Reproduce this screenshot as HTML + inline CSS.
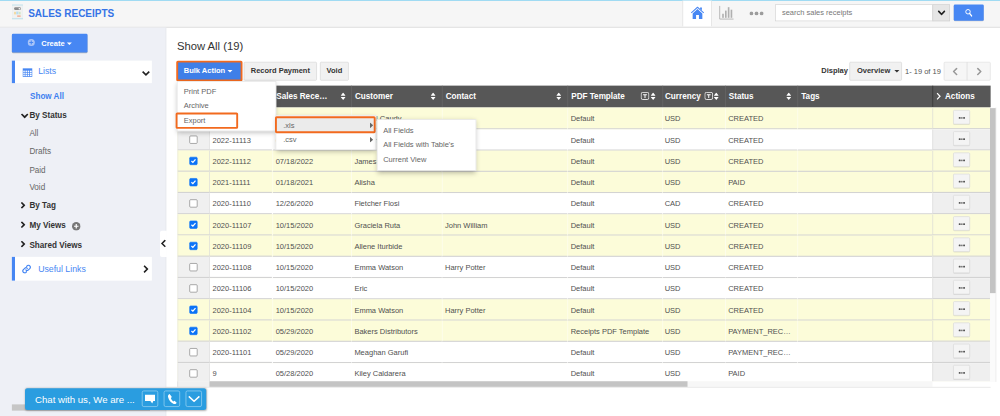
<!DOCTYPE html>
<html lang="en">
<head>
<meta charset="utf-8">
<title>Sales Receipts</title>
<style>
*{box-sizing:border-box;margin:0;padding:0}
html,body{width:1000px;height:416px;overflow:hidden;background:#fff}
body{font-family:"Liberation Sans",Arial,sans-serif;font-size:12px;color:#555}
#stage{position:absolute;left:0;top:0;width:1600px;height:666px;transform:scale(.625);transform-origin:0 0;background:#fff;overflow:hidden}
.abs{position:absolute}
/* ---------- header ---------- */
#hdr{position:absolute;left:0;top:0;width:1600px;height:44px;background:#f6f6f6;border-top:1.6px solid #6ccaf0;border-bottom:1.6px solid #d0d0d0}
#title{position:absolute;left:45px;top:11px;font-size:16px;font-weight:bold;color:#3573e6;line-height:20px;white-space:nowrap}
#hometab{position:absolute;left:1092px;top:0;width:47px;height:41px;background:#fff;border-left:1px solid #d9d9d9;border-right:1px solid #d9d9d9}
#search{position:absolute;left:1240px;top:6px;width:253px;height:27px;background:#fff;border:1px solid #cfcfcf;font-size:12px;color:#777;line-height:25px;padding-left:10px}
#scaret{position:absolute;left:1492px;top:6px;width:28px;height:27px;background:#e6e6e6;border:1px solid #cfcfcf}
#sbtn{position:absolute;left:1526px;top:6px;width:48px;height:26px;background:#4787f3;border-radius:2px;box-shadow:0 1px 1px rgba(0,0,0,.2)}
/* ---------- sidebar ---------- */
#side{position:absolute;left:0;top:44px;width:266px;height:622px;background:#eef0f6;border-right:1px solid #e3e5ea}
#create{position:absolute;left:19px;top:10px;width:121px;height:30px;background:#4787f3;color:#fff;font-weight:bold;font-size:12px;line-height:30px;border-radius:2px;box-shadow:0 1px 1px rgba(0,0,0,.25);white-space:nowrap}
.panel{position:absolute;left:19px;width:224px;background:#fff;border-left:5px solid #4787f3;color:#4787f3;font-size:14px;white-space:nowrap}
.nav{position:absolute;white-space:nowrap;font-size:13px;line-height:16px}
.nav.b{font-weight:bold;color:#333}
.nav.n{color:#666}
/* ---------- main ---------- */
#h1{position:absolute;left:283px;top:63px;font-size:18px;line-height:22px;color:#333;white-space:nowrap}
.btn{position:absolute;top:99px;height:30px;background:#f1f1f1;border:1px solid #d4d4d4;border-radius:2px;font-weight:bold;font-size:12px;color:#333;line-height:26px;text-align:center;white-space:nowrap}
#bulk{position:absolute;left:282px;top:97px;width:106px;height:33px;background:#3f7fe8;border:3px solid #f26a1e;border-radius:2.5px;color:#fff;font-weight:bold;font-size:12px;line-height:27px;white-space:nowrap;padding-left:9px}
.caret{display:inline-block;width:0;height:0;border-left:4px solid transparent;border-right:4px solid transparent;border-top:4px solid currentColor;vertical-align:middle;margin-left:4px}
/* table */
#thead{position:absolute;left:284px;top:137px;width:1301px;height:34.8px;background:#575757}
.th{position:absolute;top:0;height:34px;line-height:34px;color:#fff;font-weight:bold;font-size:13px;white-space:nowrap;border-left:1px solid #6a6a6a;padding-left:5px}
.sort{position:absolute;top:11px}
#tbody{position:absolute;left:284px;top:171.8px;width:1300px;height:438.5px;overflow:hidden;padding-top:1.7px;background:#fcfcd9}
.row{position:relative;height:34px;width:1300px;background:#fff}
.row.sel{background:#fcfcd9}
.row .c{position:absolute;top:0;height:34px;border-bottom:2px solid #d3d3d3;line-height:34.6px;font-size:12px;color:#505050;white-space:nowrap;overflow:hidden;padding-left:4px;border-left:1px solid rgba(255,255,255,.75)}
.row .c.first{border-left:1px solid #d9d9d9}
.row .cb{position:absolute;left:0;top:0;width:51px;height:34px;background:#f0f0f0;border-left:1px solid #d6d6d6;border-bottom:2px solid #d3d3d3}
.row.sel .cb{background:#fcfcd9}
.row .act{position:absolute;left:1208px;top:0;width:92px;height:34px;background:#efefef;border-left:1px solid #d6d6d6;border-bottom:2px solid #d3d3d3}
.row.sel .act{background:#fcfcd9}
.dots{position:absolute;left:32px;top:3px;width:27px;height:23px;background:#f4f4f4;border:1px solid #d8d8d8;border-radius:2px;box-shadow:0 1px 1px rgba(0,0,0,.08)}
.dots i{position:absolute;top:9.5px;width:2.6px;height:2.6px;background:#555;border-radius:1px}
.chk{position:absolute;left:18px;top:10px;width:13px;height:13px;border:1px solid #7a7a7a;border-radius:2px;background:#fff}
.chk.on{border-color:#0b73f7;background:#0b73f7}
/* menus */
.menu{position:absolute;background:#fff;box-shadow:0 3px 8px rgba(0,0,0,.28);border:1px solid #e2e2e2;font-size:12px;color:#666}
.menu div{position:absolute;left:0;white-space:nowrap;line-height:23px;height:23px}
.cbx{top:4px;width:26px;height:26px;border:1px solid #a8daf6;border-radius:3px;background:#2a9de0}
.obox{position:absolute;border:3px solid #f26a1e;border-radius:2.5px}
</style>
</head>
<body>
<div id="stage">

<!-- ================= HEADER ================= -->
<div id="hdr">
  <svg class="abs" style="left:19px;top:6px" width="18" height="24" viewBox="0 0 18 24">
    <rect x="0.5" y="0.5" width="17" height="23" fill="#f1f1f0" stroke="#e3eef2" stroke-width="1"/>
    <rect x="0" y="0" width="18" height="1.6" fill="#b4dcea"/><rect x="0" y="22.4" width="18" height="1.6" fill="#b4dcea"/>
    <rect x="3.5" y="4.5" width="11" height="4.6" rx="2.2" fill="#8c8c8c"/><rect x="10.6" y="5.6" width="3" height="2.4" rx="1.2" fill="#f4f4f4"/>
    <rect x="3.5" y="12" width="3" height="4" fill="#f3d9a0"/><rect x="7" y="11.5" width="3.5" height="4.5" fill="#b9dcef"/><rect x="11" y="12" width="3" height="4" fill="#cfe6c4"/>
    <rect x="8.5" y="17.5" width="5.5" height="2.6" fill="#f2b49c"/>
  </svg>
  <div id="title">SALES RECEIPTS</div>

  <div id="hometab">
    <svg class="abs" style="left:12px;top:9px" width="22" height="21" viewBox="0 0 24 23">
      <path d="M12 0.5 L23.5 11 L22.3 12.3 L12 3 L1.7 12.3 L0.5 11 Z" fill="#4787f3"/>
      <path d="M16.5 2 h3.2 v5.2 l-3.2 -2.9 Z" fill="#4787f3"/>
      <path d="M12 5 L20.5 12.7 V22.5 H14.5 V15.5 H9.5 V22.5 H3.5 V12.7 Z" fill="#4787f3"/>
    </svg>
  </div>
  <svg class="abs" style="left:1150px;top:8px" width="24" height="23" viewBox="0 0 24 23">
    <path d="M1.5 0 V21.5 H24" fill="none" stroke="#b9b9b9" stroke-width="1.6"/>
    <rect x="5.5" y="13" width="2.6" height="6.5" fill="#b0b0b0"/>
    <rect x="10" y="8" width="2.6" height="11.5" fill="#b0b0b0"/>
    <rect x="14.5" y="2.5" width="2.6" height="17" fill="#b0b0b0"/>
    <rect x="19" y="6.5" width="2.6" height="13" fill="#b0b0b0"/>
  </svg>
  <svg class="abs" style="left:1199px;top:17px" width="23" height="7" viewBox="0 0 23 7">
    <circle cx="3.2" cy="3.5" r="3" fill="#9c9c9c"/><circle cx="11.4" cy="3.5" r="3" fill="#9c9c9c"/><circle cx="19.6" cy="3.5" r="3" fill="#9c9c9c"/>
  </svg>
  <div id="search">search sales receipts</div>
  <div id="scaret">
    <svg class="abs" style="left:7px;top:8px" width="13" height="9" viewBox="0 0 13 9"><path d="M1.2 1.5 L6.5 6.8 L11.8 1.5" fill="none" stroke="#222" stroke-width="2.6"/></svg>
  </div>
  <div id="sbtn">
    <svg class="abs" style="left:18px;top:7px" width="12" height="13" viewBox="0 0 12 13"><circle cx="4.8" cy="4.8" r="3.6" fill="none" stroke="#fff" stroke-width="1.5"/><path d="M7.4 7.6 L10.8 11.6" stroke="#fff" stroke-width="1.9" stroke-linecap="round"/></svg>
  </div>
</div>

<!-- ================= SIDEBAR ================= -->
<div id="side">
  <div id="create">
    <svg class="abs" style="left:25px;top:8px" width="12" height="12" viewBox="0 0 13 13"><circle cx="6.5" cy="6.5" r="6.2" fill="#a9c4f8"/><path d="M6.5 3.2 V9.8 M3.2 6.5 H9.8" stroke="#4787f3" stroke-width="1.8"/></svg>
    <span class="abs" style="left:47px;top:0">Create<span class="caret"></span></span>
  </div>

  <div class="panel" style="top:53px;height:36px;line-height:33px">
    <svg class="abs" style="left:12px;top:12px" width="16" height="14" viewBox="0 0 16 14"><rect x="0" y="0" width="16" height="14" fill="#4787f3"/><g fill="#fff"><rect x="1.3" y="4" width="2.3" height="2.4"/><rect x="4.8" y="4" width="2.3" height="2.4"/><rect x="8.3" y="4" width="2.3" height="2.4"/><rect x="11.8" y="4" width="2.9" height="2.4"/><rect x="1.3" y="7.4" width="2.3" height="2.4"/><rect x="4.8" y="7.4" width="2.3" height="2.4"/><rect x="8.3" y="7.4" width="2.3" height="2.4"/><rect x="11.8" y="7.4" width="2.9" height="2.4"/><rect x="1.3" y="10.6" width="2.3" height="2.2"/><rect x="4.8" y="10.6" width="2.3" height="2.2"/><rect x="8.3" y="10.6" width="2.3" height="2.2"/><rect x="11.8" y="10.6" width="2.9" height="2.2"/></g></svg>
    <span class="abs" style="left:37px;top:0">Lists</span>
    <svg class="abs" style="left:203px;top:16px" width="13" height="9" viewBox="0 0 13 9"><path d="M1.2 1.5 L6.5 6.8 L11.8 1.5" fill="none" stroke="#222" stroke-width="2.6"/></svg>
  </div>

  <div class="nav" style="left:48px;top:103px;font-weight:bold;color:#3f80f0">Show All</div>

  <svg class="abs" style="left:33px;top:137px" width="13" height="9" viewBox="0 0 11 8"><path d="M1 1.2 L5.5 5.8 L10 1.2" fill="none" stroke="#222" stroke-width="2.4"/></svg>
  <div class="nav b" style="left:47px;top:132px">By Status</div>
  <div class="nav n" style="left:47px;top:161px">All</div>
  <div class="nav n" style="left:47px;top:190.5px">Drafts</div>
  <div class="nav n" style="left:47px;top:219.5px">Paid</div>
  <div class="nav n" style="left:47px;top:247.5px">Void</div>

  <svg class="abs" style="left:33px;top:279px" width="8" height="11" viewBox="0 0 8 11"><path d="M1.2 1 L5.8 5.5 L1.2 10" fill="none" stroke="#222" stroke-width="2.6"/></svg>
  <div class="nav b" style="left:47px;top:276px">By Tag</div>
  <svg class="abs" style="left:33px;top:310px" width="8" height="11" viewBox="0 0 8 11"><path d="M1.2 1 L5.8 5.5 L1.2 10" fill="none" stroke="#222" stroke-width="2.6"/></svg>
  <div class="nav b" style="left:47px;top:308.5px">My Views</div>
  <svg class="abs" style="left:115px;top:311px" width="14" height="14" viewBox="0 0 13 13"><circle cx="6.5" cy="6.5" r="6.3" fill="#777"/><path d="M6.5 3.2 V9.8 M3.2 6.5 H9.8" stroke="#fff" stroke-width="1.8"/></svg>
  <svg class="abs" style="left:33px;top:341px" width="8" height="11" viewBox="0 0 8 11"><path d="M1.2 1 L5.8 5.5 L1.2 10" fill="none" stroke="#222" stroke-width="2.6"/></svg>
  <div class="nav b" style="left:47px;top:339.5px">Shared Views</div>

  <div class="panel" style="top:367px;height:38px;line-height:38px">
    <svg class="abs" style="left:11px;top:12px" width="15" height="15" viewBox="0 0 15 15"><g fill="none" stroke="#4787f3" stroke-width="1.9" stroke-linecap="round"><path d="M6.3 8.7 a3 3 0 0 0 4.2 0 l2.4 -2.4 a3 3 0 0 0 -4.2 -4.2 l-1.1 1.1"/><path d="M8.7 6.3 a3 3 0 0 0 -4.2 0 l-2.4 2.4 a3 3 0 0 0 4.2 4.2 l1.1 -1.1"/></g></svg>
    <span class="abs" style="left:37px;top:0">Useful Links</span>
    <svg class="abs" style="left:205px;top:13px" width="9" height="13" viewBox="0 0 9 13"><path d="M1.5 1.2 L6.8 6.5 L1.5 11.8" fill="none" stroke="#222" stroke-width="2.6"/></svg>
  </div>

  <!-- collapse handle -->
  <div class="abs" style="left:256px;top:325px;width:11px;height:42px;background:#fff;border-radius:3px 0 0 3px">
    <svg class="abs" style="left:1px;top:14px" width="9" height="13" viewBox="0 0 9 13"><path d="M7.5 1.2 L2.2 6.5 L7.5 11.8" fill="none" stroke="#222" stroke-width="2.4"/></svg>
  </div>
  <!-- sidebar h scrollbar -->
  <div class="abs" style="left:19px;top:603px;width:221px;height:9.5px;background:#c6c6c6"></div>
</div>

<!-- ================= MAIN ================= -->
<div id="h1">Show All (19)</div>

<div id="bulk">Bulk Action<span class="caret"></span></div>
<div class="btn" style="left:390px;width:117px">Record Payment</div>
<div class="btn" style="left:512px;width:46px">Void</div>

<div class="abs" style="left:1314px;top:105px;font-weight:bold;font-size:12px;color:#333;line-height:16px">Display</div>
<div class="btn" style="left:1359px;width:84px;text-align:left;padding-left:11px">Overview<span class="caret" style="margin-left:7px"></span></div>
<div class="abs" style="left:1448px;top:106px;font-size:12px;color:#555;line-height:16px;white-space:nowrap">1- 19 of 19</div>
<div class="btn" style="left:1510px;width:38px;border-radius:2px 0 0 2px;background:#f6f6f6;border-color:#dedede">
  <svg class="abs" style="left:13px;top:8px" width="9" height="13" viewBox="0 0 9 13"><path d="M7.3 1 L1.8 6.5 L7.3 12" fill="none" stroke="#979797" stroke-width="2.3"/></svg>
</div>
<div class="btn" style="left:1547px;width:38px;border-radius:0 2px 2px 0;background:#f6f6f6;border-color:#dedede">
  <svg class="abs" style="left:14px;top:8px" width="9" height="13" viewBox="0 0 9 13"><path d="M1.7 1 L7.2 6.5 L1.7 12" fill="none" stroke="#979797" stroke-width="2.3"/></svg>
</div>

<!-- table header -->
<div id="thead">
  <div class="th" style="left:0;width:51px;border-left:none"></div>
  <div class="th" style="left:51px;width:100px">#</div>
  <div class="th" style="left:152px;width:126px">Sales Rece…<svg class="sort" style="left:108px" width="8" height="12" viewBox="0 0 8 12"><path d="M4 0 L8 5 H0 Z M0 7 H8 L4 12 Z" fill="#fff"/></svg></div>
  <div class="th" style="left:278px;width:145px">Customer<svg class="sort" style="left:126px" width="8" height="12" viewBox="0 0 8 12"><path d="M4 0 L8 5 H0 Z M0 7 H8 L4 12 Z" fill="#fff"/></svg></div>
  <div class="th" style="left:423px;width:201px">Contact<svg class="sort" style="left:182px" width="8" height="12" viewBox="0 0 8 12"><path d="M4 0 L8 5 H0 Z M0 7 H8 L4 12 Z" fill="#fff"/></svg></div>
  <div class="th" style="left:624px;width:152px">PDF Template<svg class="sort" style="left:116px;top:10px" width="14" height="13" viewBox="0 0 14 13"><rect x="0.8" y="0.8" width="12.4" height="11.4" rx="2.5" fill="none" stroke="#fff" stroke-width="1.3"/><path d="M4 3.6 H10 V5.2 H7.8 V9.8 H6.2 V5.2 H4 Z" fill="#fff"/></svg><svg class="sort" style="left:132px" width="8" height="12" viewBox="0 0 8 12"><path d="M4 0 L8 5 H0 Z M0 7 H8 L4 12 Z" fill="#fff"/></svg></div>
  <div class="th" style="left:776px;width:100px;padding-left:3px">Currency<svg class="sort" style="left:66px;top:10px" width="14" height="13" viewBox="0 0 14 13"><rect x="0.8" y="0.8" width="12.4" height="11.4" rx="2.5" fill="none" stroke="#fff" stroke-width="1.3"/><path d="M4 3.6 H10 V5.2 H7.8 V9.8 H6.2 V5.2 H4 Z" fill="#fff"/></svg><svg class="sort" style="left:81px" width="8" height="12" viewBox="0 0 8 12"><path d="M4 0 L8 5 H0 Z M0 7 H8 L4 12 Z" fill="#fff"/></svg></div>
  <div class="th" style="left:876px;width:116px">Status<svg class="sort" style="left:97px" width="8" height="12" viewBox="0 0 8 12"><path d="M4 0 L8 5 H0 Z M0 7 H8 L4 12 Z" fill="#fff"/></svg></div>
  <div class="th" style="left:992px;width:216px">Tags</div>
  <div class="th" style="left:1208px;width:93px;border-left:1px solid #2e2e2e">
    <svg class="abs" style="left:5px;top:11px" width="8" height="12" viewBox="0 0 8 12"><path d="M1.3 1 L6 6 L1.3 11" fill="none" stroke="#fff" stroke-width="2"/></svg>
    <span class="abs" style="left:19px;top:0">Actions</span>
  </div>
</div>

<!-- table body -->
<div id="tbody">
<div class="row sel"><div class="cb"><span class="chk on"><svg class="abs" style="left:1px;top:1px" width="9" height="9" viewBox="0 0 9 9"><path d="M1.3 4.6 L3.6 6.9 L7.8 2" fill="none" stroke="#fff" stroke-width="2"/></svg></span></div><div class="c first" style="left:51px;width:100px">2022-11114</div><div class="c" style="left:152px;width:126px">08/02/2022</div><div class="c" style="left:278px;width:145px">Rachel Caudy</div><div class="c" style="left:423px;width:201px"></div><div class="c" style="left:624px;width:152px">Default</div><div class="c" style="left:776px;width:100px;padding-left:2.5px">USD</div><div class="c" style="left:876px;width:116px">CREATED</div><div class="c" style="left:992px;width:216px"></div><div class="act"><span class="dots"><i style="left:8px"></i><i style="left:11.7px"></i><i style="left:15.4px"></i></span></div></div>
<div class="row"><div class="cb"><span class="chk"></span></div><div class="c first" style="left:51px;width:100px">2022-11113</div><div class="c" style="left:152px;width:126px">07/25/2022</div><div class="c" style="left:278px;width:145px">Joseph Degroot</div><div class="c" style="left:423px;width:201px"></div><div class="c" style="left:624px;width:152px">Default</div><div class="c" style="left:776px;width:100px;padding-left:2.5px">USD</div><div class="c" style="left:876px;width:116px">CREATED</div><div class="c" style="left:992px;width:216px"></div><div class="act"><span class="dots"><i style="left:8px"></i><i style="left:11.7px"></i><i style="left:15.4px"></i></span></div></div>
<div class="row sel"><div class="cb"><span class="chk on"><svg class="abs" style="left:1px;top:1px" width="9" height="9" viewBox="0 0 9 9"><path d="M1.3 4.6 L3.6 6.9 L7.8 2" fill="none" stroke="#fff" stroke-width="2"/></svg></span></div><div class="c first" style="left:51px;width:100px">2022-11112</div><div class="c" style="left:152px;width:126px">07/18/2022</div><div class="c" style="left:278px;width:145px">James Butt</div><div class="c" style="left:423px;width:201px"></div><div class="c" style="left:624px;width:152px">Default</div><div class="c" style="left:776px;width:100px;padding-left:2.5px">USD</div><div class="c" style="left:876px;width:116px">CREATED</div><div class="c" style="left:992px;width:216px"></div><div class="act"><span class="dots"><i style="left:8px"></i><i style="left:11.7px"></i><i style="left:15.4px"></i></span></div></div>
<div class="row sel"><div class="cb"><span class="chk on"><svg class="abs" style="left:1px;top:1px" width="9" height="9" viewBox="0 0 9 9"><path d="M1.3 4.6 L3.6 6.9 L7.8 2" fill="none" stroke="#fff" stroke-width="2"/></svg></span></div><div class="c first" style="left:51px;width:100px">2021-11111</div><div class="c" style="left:152px;width:126px">01/18/2021</div><div class="c" style="left:278px;width:145px">Alisha</div><div class="c" style="left:423px;width:201px"></div><div class="c" style="left:624px;width:152px">Default</div><div class="c" style="left:776px;width:100px;padding-left:2.5px">USD</div><div class="c" style="left:876px;width:116px">PAID</div><div class="c" style="left:992px;width:216px"></div><div class="act"><span class="dots"><i style="left:8px"></i><i style="left:11.7px"></i><i style="left:15.4px"></i></span></div></div>
<div class="row"><div class="cb"><span class="chk"></span></div><div class="c first" style="left:51px;width:100px">2020-11110</div><div class="c" style="left:152px;width:126px">12/26/2020</div><div class="c" style="left:278px;width:145px">Fletcher Flosi</div><div class="c" style="left:423px;width:201px"></div><div class="c" style="left:624px;width:152px">Default</div><div class="c" style="left:776px;width:100px;padding-left:2.5px">CAD</div><div class="c" style="left:876px;width:116px">CREATED</div><div class="c" style="left:992px;width:216px"></div><div class="act"><span class="dots"><i style="left:8px"></i><i style="left:11.7px"></i><i style="left:15.4px"></i></span></div></div>
<div class="row sel"><div class="cb"><span class="chk on"><svg class="abs" style="left:1px;top:1px" width="9" height="9" viewBox="0 0 9 9"><path d="M1.3 4.6 L3.6 6.9 L7.8 2" fill="none" stroke="#fff" stroke-width="2"/></svg></span></div><div class="c first" style="left:51px;width:100px">2020-11107</div><div class="c" style="left:152px;width:126px">10/15/2020</div><div class="c" style="left:278px;width:145px">Graciela Ruta</div><div class="c" style="left:423px;width:201px">John William</div><div class="c" style="left:624px;width:152px">Default</div><div class="c" style="left:776px;width:100px;padding-left:2.5px">USD</div><div class="c" style="left:876px;width:116px">CREATED</div><div class="c" style="left:992px;width:216px"></div><div class="act"><span class="dots"><i style="left:8px"></i><i style="left:11.7px"></i><i style="left:15.4px"></i></span></div></div>
<div class="row sel"><div class="cb"><span class="chk on"><svg class="abs" style="left:1px;top:1px" width="9" height="9" viewBox="0 0 9 9"><path d="M1.3 4.6 L3.6 6.9 L7.8 2" fill="none" stroke="#fff" stroke-width="2"/></svg></span></div><div class="c first" style="left:51px;width:100px">2020-11109</div><div class="c" style="left:152px;width:126px">10/15/2020</div><div class="c" style="left:278px;width:145px">Allene Iturbide</div><div class="c" style="left:423px;width:201px"></div><div class="c" style="left:624px;width:152px">Default</div><div class="c" style="left:776px;width:100px;padding-left:2.5px">USD</div><div class="c" style="left:876px;width:116px">CREATED</div><div class="c" style="left:992px;width:216px"></div><div class="act"><span class="dots"><i style="left:8px"></i><i style="left:11.7px"></i><i style="left:15.4px"></i></span></div></div>
<div class="row"><div class="cb"><span class="chk"></span></div><div class="c first" style="left:51px;width:100px">2020-11108</div><div class="c" style="left:152px;width:126px">10/15/2020</div><div class="c" style="left:278px;width:145px">Emma Watson</div><div class="c" style="left:423px;width:201px">Harry Potter</div><div class="c" style="left:624px;width:152px">Default</div><div class="c" style="left:776px;width:100px;padding-left:2.5px">USD</div><div class="c" style="left:876px;width:116px">CREATED</div><div class="c" style="left:992px;width:216px"></div><div class="act"><span class="dots"><i style="left:8px"></i><i style="left:11.7px"></i><i style="left:15.4px"></i></span></div></div>
<div class="row"><div class="cb"><span class="chk"></span></div><div class="c first" style="left:51px;width:100px">2020-11106</div><div class="c" style="left:152px;width:126px">10/15/2020</div><div class="c" style="left:278px;width:145px">Eric</div><div class="c" style="left:423px;width:201px"></div><div class="c" style="left:624px;width:152px">Default</div><div class="c" style="left:776px;width:100px;padding-left:2.5px">USD</div><div class="c" style="left:876px;width:116px">CREATED</div><div class="c" style="left:992px;width:216px"></div><div class="act"><span class="dots"><i style="left:8px"></i><i style="left:11.7px"></i><i style="left:15.4px"></i></span></div></div>
<div class="row sel"><div class="cb"><span class="chk on"><svg class="abs" style="left:1px;top:1px" width="9" height="9" viewBox="0 0 9 9"><path d="M1.3 4.6 L3.6 6.9 L7.8 2" fill="none" stroke="#fff" stroke-width="2"/></svg></span></div><div class="c first" style="left:51px;width:100px">2020-11104</div><div class="c" style="left:152px;width:126px">10/15/2020</div><div class="c" style="left:278px;width:145px">Emma Watson</div><div class="c" style="left:423px;width:201px">Harry Potter</div><div class="c" style="left:624px;width:152px">Default</div><div class="c" style="left:776px;width:100px;padding-left:2.5px">USD</div><div class="c" style="left:876px;width:116px">CREATED</div><div class="c" style="left:992px;width:216px"></div><div class="act"><span class="dots"><i style="left:8px"></i><i style="left:11.7px"></i><i style="left:15.4px"></i></span></div></div>
<div class="row sel"><div class="cb"><span class="chk on"><svg class="abs" style="left:1px;top:1px" width="9" height="9" viewBox="0 0 9 9"><path d="M1.3 4.6 L3.6 6.9 L7.8 2" fill="none" stroke="#fff" stroke-width="2"/></svg></span></div><div class="c first" style="left:51px;width:100px">2020-11102</div><div class="c" style="left:152px;width:126px">05/29/2020</div><div class="c" style="left:278px;width:145px">Bakers Distributors</div><div class="c" style="left:423px;width:201px"></div><div class="c" style="left:624px;width:152px">Receipts PDF Template</div><div class="c" style="left:776px;width:100px;padding-left:2.5px">USD</div><div class="c" style="left:876px;width:116px">PAYMENT_REC…</div><div class="c" style="left:992px;width:216px"></div><div class="act"><span class="dots"><i style="left:8px"></i><i style="left:11.7px"></i><i style="left:15.4px"></i></span></div></div>
<div class="row"><div class="cb"><span class="chk"></span></div><div class="c first" style="left:51px;width:100px">2020-11101</div><div class="c" style="left:152px;width:126px">05/29/2020</div><div class="c" style="left:278px;width:145px">Meaghan Garufi</div><div class="c" style="left:423px;width:201px"></div><div class="c" style="left:624px;width:152px">Default</div><div class="c" style="left:776px;width:100px;padding-left:2.5px">USD</div><div class="c" style="left:876px;width:116px">PAYMENT_REC…</div><div class="c" style="left:992px;width:216px"></div><div class="act"><span class="dots"><i style="left:8px"></i><i style="left:11.7px"></i><i style="left:15.4px"></i></span></div></div>
<div class="row"><div class="cb"><span class="chk"></span></div><div class="c first" style="left:51px;width:100px">9</div><div class="c" style="left:152px;width:126px">05/28/2020</div><div class="c" style="left:278px;width:145px">Kiley Caldarera</div><div class="c" style="left:423px;width:201px"></div><div class="c" style="left:624px;width:152px">Default</div><div class="c" style="left:776px;width:100px;padding-left:2.5px">USD</div><div class="c" style="left:876px;width:116px">PAID</div><div class="c" style="left:992px;width:216px"></div><div class="act"><span class="dots"><i style="left:8px"></i><i style="left:11.7px"></i><i style="left:15.4px"></i></span></div></div>
</div>

<!-- ================= MENUS ================= -->
<div class="menu" style="left:283px;top:130px;width:159px;height:80px">
  <div style="left:10px;top:4px">Print PDF</div>
  <div style="left:10px;top:26.5px">Archive</div>
  <div style="left:10px;top:51px">Export</div>
</div>
<div class="obox" style="left:281px;top:180px;width:100px;height:26px"></div>

<div class="menu" style="left:441px;top:184px;width:161px;height:56px">
  <div style="left:0;top:4px;width:159px;background:#ebebeb"></div>
  <div style="left:11px;top:4px">.xls</div>
  <div style="left:11px;top:27px">.csv</div>
  <svg class="abs" style="left:150px;top:11px" width="5" height="9" viewBox="0 0 5 9"><path d="M0 0 L5 4.5 L0 9 Z" fill="#666"/></svg>
  <svg class="abs" style="left:150px;top:34px" width="5" height="9" viewBox="0 0 5 9"><path d="M0 0 L5 4.5 L0 9 Z" fill="#666"/></svg>
</div>
<div class="obox" style="left:440px;top:186px;width:161px;height:27px"></div>

<div class="menu" style="left:603px;top:191px;width:159px;height:81.5px">
  <div style="left:9px;top:5px">All Fields</div>
  <div style="left:9px;top:28px">All Fields with Table's</div>
  <div style="left:9px;top:52px">Current View</div>
</div>

<!-- bottom scrollbars -->
<div class="abs" style="left:284px;top:610px;width:1208px;height:9px;background:#f7f7f7"></div>
<div class="abs" style="left:284px;top:610px;width:51px;height:9px;background:#f0f0f0;border-left:1px solid #d6d6d6"></div>
<div class="abs" style="left:335px;top:610px;width:765px;height:9px;background:#c4c4c4"></div>
<div class="abs" style="left:266px;top:619px;width:1319px;height:1px;background:#dcdcdc"></div>
<!-- v scrollbar -->
<div class="abs" style="left:1584px;top:172px;width:10px;height:439px;background:#fbfbfb;border-right:1px solid #e6e6e6"></div>
<div class="abs" style="left:1584px;top:173px;width:9px;height:296px;background:#c4c4c4"></div>

<!-- chat widget -->
<div class="abs" style="left:40px;top:621px;width:290px;height:35px;background:#2a9de0;border-radius:4px;box-shadow:0 1px 3px rgba(0,0,0,.3)">
  <div class="abs" style="left:16px;top:0;line-height:35px;color:#fff;font-size:15.4px;white-space:nowrap">Chat with us, We are ...</div>
  <div class="abs cbx" style="left:187px"><svg class="abs" style="left:4px;top:5px" width="16" height="15" viewBox="0 0 16 15"><path d="M0 0 H16 V10.5 H13.2 L11.6 14.5 L8.6 10.5 H0 Z" fill="#fff"/></svg></div>
  <div class="abs cbx" style="left:222px"><svg class="abs" style="left:5px;top:4px" width="15" height="17" viewBox="0 0 15 17"><path d="M3.4 0.4 C1.4 1.2 0.4 3 0.9 5.2 C2 10.2 5.3 14.2 10 16.2 C12 17 13.8 16.2 14.8 14.2 L11.2 11 L9.2 12.2 C7.6 11 6 8.8 5.4 6.6 L7 5.2 Z" fill="#fff"/></svg></div>
  <div class="abs cbx" style="left:257px"><svg class="abs" style="left:3px;top:7px" width="19" height="11" viewBox="0 0 19 11"><path d="M1 1.2 L9.5 9 L18 1.2" fill="none" stroke="#fff" stroke-width="2.4"/></svg></div>
</div>

</div>
</body>
</html>
